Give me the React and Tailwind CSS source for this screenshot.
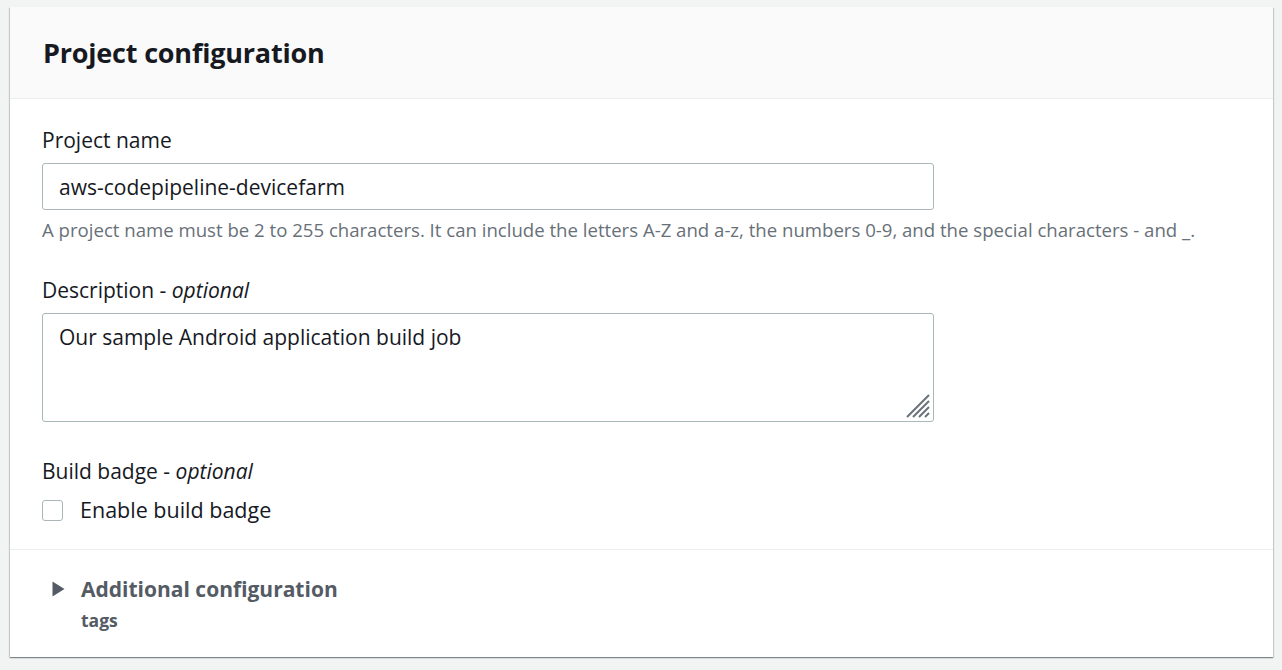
import React, { useState } from 'react';

const ProjectConfig = () => {
  const [name, setName] = useState('aws-codepipeline-devicefarm');
  const [desc, setDesc] = useState('Our sample Android application build job');
  const [badge, setBadge] = useState(false);

  return (
    <div className="min-h-screen bg-[#f2f3f3] pt-[7px] pl-[10px] pr-[9px] font-['Open_Sans',sans-serif]">
      <div className="bg-white shadow-[0_1px_1px_0_rgba(0,28,36,0.3),1px_1px_1px_0_rgba(0,28,36,0.15),-1px_1px_1px_0_rgba(0,28,36,0.15)]">
        {/* Cabecera */}
        <div className="h-[92px] bg-[#fafafa] border-b border-[#eaeded] flex items-center px-[33px]">
          <h2 className="text-[27px] font-bold text-[#16191f] tracking-[-0.2px] leading-[34px]">Project configuration</h2>
        </div>

        {/* Formulario */}
        <div className="px-[32px] pt-[28px] pb-[26px] border-b border-[#eaeded]">
          <label className="block text-[21px] text-[#16191f] leading-[26px]">Project name</label>
          <input
            type="text"
            value={name}
            onChange={e => setName(e.target.value)}
            className="mt-[10px] block w-[892px] h-[47px] px-[16px] border border-[#aab7b8] rounded-[3px] text-[21px] text-[#16191f] outline-none"
          />
          <p className="mt-[9px] text-[18.6px] text-[#687078] leading-[22px]">
            A project name must be 2 to 255 characters. It can include the letters A-Z and a-z, the numbers 0-9, and the special characters - and _.
          </p>

          <label className="block mt-[36px] text-[21px] text-[#16191f] leading-[26px]">
            Description - <i>optional</i>
          </label>
          <div className="relative mt-[10px] w-[892px]">
            <textarea
              value={desc}
              onChange={e => setDesc(e.target.value)}
              className="block w-full h-[109px] px-[16px] py-[10px] border border-[#aab7b8] rounded-[3px] text-[21px] text-[#16191f] leading-[26px] outline-none resize-none"
            />
            <svg className="absolute right-[3px] bottom-[3px] pointer-events-none" width="26" height="26" viewBox="0 0 26 26">
              <g stroke="#687078" strokeWidth="2">
                <line x1="2" y1="24" x2="24" y2="2" />
                <line x1="8" y1="24" x2="24" y2="8" />
                <line x1="14" y1="24" x2="24" y2="14" />
                <line x1="20" y1="24" x2="24" y2="20" />
              </g>
            </svg>
          </div>

          <label className="block mt-[36px] text-[21px] text-[#16191f] leading-[26px]">
            Build badge - <i>optional</i>
          </label>
          <label className="mt-[13px] flex items-center gap-[17px] cursor-pointer">
            <input
              type="checkbox"
              checked={badge}
              onChange={e => setBadge(e.target.checked)}
              className="appearance-none w-[21px] h-[21px] border border-[#aab7b8] rounded-[3px] bg-white checked:bg-[#0073bb]"
            />
            <span className="text-[21.5px] text-[#16191f] leading-[26px]">Enable build badge</span>
          </label>
        </div>

        {/* Configuración adicional */}
        <div className="pl-[42px] pt-[26px] pb-[25px]">
          <div className="flex items-center gap-[16px]">
            <svg width="13" height="16" viewBox="0 0 13 16">
              <path d="M0.5 0.5 L12.5 8 L0.5 15.5 Z" fill="#545b64" />
            </svg>
            <span className="text-[21px] font-bold text-[#545b64] leading-[26px]">Additional configuration</span>
          </div>
          <div className="pl-[29px] mt-[6px] text-[17.5px] font-bold text-[#545b64] leading-[24px]">tags</div>
        </div>
      </div>
    </div>
  );
};

export default function App() {
  return <ProjectConfig />;
}
